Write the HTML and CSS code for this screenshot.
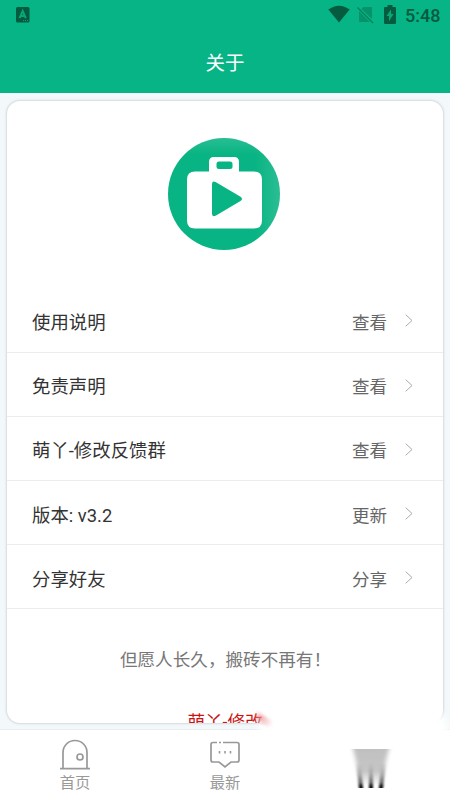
FILE: index.html
```html
<!DOCTYPE html>
<html lang="zh-CN">
<head>
<meta charset="utf-8">
<title>关于</title>
<link rel="stylesheet" href="styles.css">
</head>
<body>
<div class="app">
  <header class="header">
    <div class="status">
      <svg class="keyboard" width="14" height="16" viewBox="0 0 14 16"><rect width="13.5" height="15.5" rx="1.5" fill="#045b40"/><path d="M3.600 11.200 6.700 4l3.100 7.200M4.800 9h3.800" fill="none" stroke="#08a777" stroke-width="2"/><path d="M7 13.600h5" stroke="#08a777" stroke-dasharray="1 1"/></svg>
      <div class="signals">
        <svg width="22" height="18" viewBox="0 0 22 18"><path d="M.3 4.600Q11-3.200 21.700 4.600L11 17.500Z" fill="#045b40"/></svg>
        <svg class="sim" width="17" height="18" viewBox="0 0 17 18"><path d="M6.500 1H14q1 0 1 1v11L4.500 3ZM2 5 12.800 16H3q-1 0-1-1Z" fill="#06936b"/><path d="m.5 1.500 15.500 15.500" stroke="#067f5b" stroke-width="1.300"/></svg>
        <svg class="battery" width="12" height="19" viewBox="0 0 12 19"><path d="M3.500 0h5v2H11q1 0 1 1v15q0 1-1 1H1q-1 0-1-1V3q0-1 1-1h2.500Z" fill="#045b40"/><path d="M7 4.500 2.500 11H5v5.200L9.500 9H7Z" fill="#08a777"/></svg>
        <span class="clock">5:48</span>
      </div>
    </div>
    <h1 class="title">关于</h1>
  </header>
  <main class="content">
    <section class="card">
      <div class="logo">
        <svg width="112" height="112" viewBox="0 0 112 112">
          <defs><linearGradient id="shade" x1="0" x2="1"><stop offset=".78" stop-color="#08b483"/><stop offset="1" stop-color="#2cbd94"/></linearGradient>
          <linearGradient id="top" x1="0" x2="0" y1="0" y2="1"><stop offset="0" stop-color="#fff" stop-opacity=".13"/><stop offset=".15" stop-color="#fff" stop-opacity="0"/></linearGradient></defs>
          <circle cx="56" cy="56" r="56" fill="url(#shade)"/><circle cx="56" cy="56" r="56" fill="url(#top)"/>
          <path fill="#fff" d="M46 19h20q5 0 5 5v9.500H86q8 0 8 8v41q0 8-8 8H27q-8 0-8-8v-41q0-8 8-8h14V24q0-5 5-5Z"/>
          <rect x="48.500" y="23.500" width="16" height="7.500" rx="2.500" fill="#08b483"/>
          <path d="M44 46.500q0-4.500 4-2.200l24.500 14.500q3 2.200 0 4.300L48 77.500q-4 2-4-2Z" fill="#08b483"/>
        </svg>
      </div>
      <ul class="list">
        <li class="row"><span class="label">使用说明</span><span class="value">查看</span><svg class="arrow" viewBox="0 0 8 13"><path d="m.7.700 6.300 5.800L.7 12.300"/></svg></li>
        <li class="row"><span class="label">免责声明</span><span class="value">查看</span><svg class="arrow" viewBox="0 0 8 13"><path d="m.7.700 6.300 5.800L.7 12.300"/></svg></li>
        <li class="row"><span class="label">萌丫-修改反馈群</span><span class="value">查看</span><svg class="arrow" viewBox="0 0 8 13"><path d="m.7.700 6.300 5.800L.7 12.300"/></svg></li>
        <li class="row"><span class="label">版本: v3.2</span><span class="value">更新</span><svg class="arrow" viewBox="0 0 8 13"><path d="m.7.700 6.300 5.800L.7 12.300"/></svg></li>
        <li class="row"><span class="label">分享好友</span><span class="value">分享</span><svg class="arrow" viewBox="0 0 8 13"><path d="m.7.700 6.300 5.800L.7 12.300"/></svg></li>
      </ul>
      <p class="motto">但愿人长久，搬砖不再有！</p>
      <p class="author">萌丫-修改</p>
    </section>
  </main>
  <nav class="tabs">
    <a class="tab"><svg width="30" height="32" viewBox="0 0 30 32"><path d="M0 30.700h30M3 30V14.500a12 12 0 0 1 24 0V30" fill="none" stroke="#999" stroke-width="1.700"/><circle cx="20" cy="19" r="3" fill="none" stroke="#999" stroke-width="1.700"/></svg><span>首页</span></a>
    <a class="tab"><svg width="30" height="32" viewBox="0 0 30 32"><path d="M7 4.500H3q-2 0-2 2V22q0 2 2 2h6l6 5 6-5h6q2 0 2-2V6.500q0-2-2-2H13M9 4.500h2" fill="none" stroke="#999" stroke-width="1.700"/><path d="M9.500 13v2.500M15 13v2.500M20.500 13v2.500" stroke="#999" stroke-width="1.600"/></svg><span>最新</span></a>
    <a class="tab tab-current"><svg width="46" height="42" viewBox="0 0 46 42">
      <defs>
        <linearGradient id="fade" x1="0" x2="0" y1="0" y2="1"><stop offset="0" stop-color="#c0c0c0"/><stop offset=".6" stop-color="#c6c6c6"/><stop offset="1" stop-color="#fff"/></linearGradient>
        <linearGradient id="finger" gradientUnits="userSpaceOnUse" x1="0" x2="0" y1="14" y2="40"><stop offset="0" stop-color="#aaa" stop-opacity="0"/><stop offset=".5" stop-color="#999" stop-opacity=".8"/><stop offset=".8" stop-color="#666"/><stop offset=".92" stop-color="#111"/><stop offset="1" stop-color="#000"/></linearGradient>
        <filter id="soft"><feGaussianBlur stdDeviation="2.2 .3"/></filter>
        <filter id="edge"><feGaussianBlur stdDeviation=".9 .3"/></filter>
      </defs>
      <path filter="url(#soft)" fill="url(#fade)" d="M5 1h36q-5 17-7 37H12Q10 18 5 1Z"/>
      <path filter="url(#edge)" fill="url(#finger)" d="M8 14h5l2 26h-4ZM21 14h4v26h-4ZM33 14h5l-3 26h-4Z"/>
    </svg></a>
  </nav>
  <div class="haze"></div>
  <div class="smear"></div>
</div>
</body>
</html>
```

FILE: styles.css
```css
* { box-sizing: border-box; }
body { margin: 0; font-family: Roboto, "Noto Sans CJK SC", sans-serif; color: #333; }
.app { position: relative; display: flex; flex-direction: column; height: 800px; overflow: hidden; background: #f3f8fa; }
.header { height: 93px; background: #06b485; }
.status { display: flex; justify-content: space-between; height: 32px; padding: 0 10px 0 16px; }
.keyboard { margin-top: 7px; }
.signals { display: flex; align-items: flex-start; padding-top: 5px; }
.sim { margin: 1px 0 0 7px; }
.battery { margin-left: 10px; }
.clock { width: 35px; margin-left: 9px; font-size: 18px; font-weight: 500; line-height: 22px; color: #045b40; white-space: nowrap; }
.title { margin: 0; font-size: 19.5px; font-weight: 400; line-height: 63px; text-align: center; color: #fff; }
.content { flex: none; height: 636px; padding: 8px 7px 6px; }
.card { height: 622px; overflow: hidden; background: #fff; border-radius: 13px; box-shadow: 0 0 2px 1px #d3d9dc; }
.logo { display: flex; justify-content: center; height: 187.4px; padding: 37px 2px 0 0; }
.list { margin: 0; padding: 0; list-style: none; }
.row { display: flex; align-items: center; height: 64.2px; padding: 3px 30px 0 25px; border-bottom: 1px solid #ececec; }
.label { margin-bottom: 1px; font-size: 18.4px; }
.value { margin-left: auto; font-size: 17.5px; color: #666; }
.arrow { width: 8px; height: 13px; margin: 0 0 1px 18px; fill: none; stroke: #aaa; stroke-width: 1; }
.motto, .author { margin: 0; font-size: 17.6px; text-align: center; white-space: nowrap; }
.motto { height: 26px; margin-top: 38px; padding-left: 1px; line-height: 26px; color: #777; }
.author { margin-top: 36px; line-height: 26px; color: #c91414; }
.tabs { display: grid; grid-template-columns: repeat(3, 1fr); flex: 1; background: #fff; border-top: 1px solid #e9eef0; }
.tab { display: flex; flex-direction: column; align-items: center; padding-top: 8px; font-size: 15.3px; line-height: 26px; color: #999; }
.tab-current { position: relative; z-index: 2; padding: 18px 8px 0 0; }
.haze { position: absolute; top: 717px; left: 267px; z-index: 1; width: 173px; height: 90px; background: #fff; border-radius: 12px; box-shadow: 0 0 8px 8px #fff; }
.smear { position: absolute; top: 716px; left: 252px; z-index: 2; width: 22px; height: 7px; background: linear-gradient(90deg, transparent, #e8777799 35%, transparent); border-radius: 4px; filter: blur(1.5px); transform: rotate(34deg); }
```
